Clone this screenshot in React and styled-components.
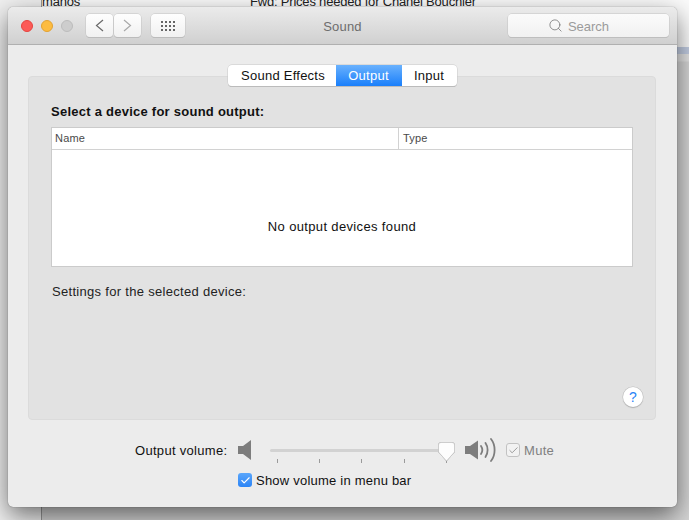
import React from "react";
import styled, { createGlobalStyle } from "styled-components";
import { Search as SearchGlyph, Check } from "lucide-react";

const GlobalStyle = createGlobalStyle`
	html, body {
		margin: 0;
		padding: 0;
		width: 689px;
		height: 520px;
		overflow: hidden;
		background: #f3f3f3;
		font-family: "Liberation Sans", Arial, sans-serif;
		-webkit-font-smoothing: antialiased;
	}
`;

const Desktop = styled.div`
	position: relative;
	width: 689px;
	height: 520px;
	padding: 7px 0 0 8px;
	box-sizing: border-box;
	overflow: hidden;
	background: #f0f0f0;
`;

// fragments of the mail window lying behind the Sound window
const BackMail = styled.div`
	position: absolute;
	left: 41px;
	top: 0;
	width: 648px;
	height: 520px;
	background: linear-gradient(to bottom, #fbfbfb 0, #fbfbfb 47px, #c2cde2 47px, #c2cde2 54px, #e4e4e4 54px, #e4e4e4 61px, #d6d6d6 62px);
	border-left: 1px solid #9a9a9a;
	box-sizing: border-box;
`;

const BackText = styled.span`
	position: absolute;
	top: -6px;
	left: ${(props) => props.$left}px;
	font-size: 13px;
	letter-spacing: -0.2px;
	color: #222;
	white-space: nowrap;
`;

const Window = styled.div`
	position: relative;
	width: 669px;
	height: 500px;
	border-radius: 5px;
	background: #ececec;
	box-shadow: 0 0 1px rgba(0, 0, 0, 0.6), 0 9px 26px rgba(0, 0, 0, 0.55);
	display: flex;
	flex-direction: column;
	overflow: hidden;
`;

const TitleBar = styled.header`
	height: 37px;
	flex: none;
	display: flex;
	align-items: center;
	padding: 0 8px 0 13px;
	background: linear-gradient(to bottom, #ebebeb, #d0d0d0);
	border-bottom: 1px solid #b0b0b0;
	position: relative;
`;

const Light = styled.span`
	width: 12px;
	height: 12px;
	border-radius: 50%;
	margin-right: 8px;
	box-sizing: border-box;
	background: ${(props) => props.$color};
	border: 1px solid ${(props) => props.$edge};
`;

const ToolButton = styled.button`
	height: 23px;
	width: ${(props) => props.$width}px;
	margin-left: ${(props) => props.$gap || 0}px;
	padding: 0;
	display: flex;
	align-items: center;
	justify-content: center;
	border: none;
	border-radius: 4px;
	background: linear-gradient(to bottom, #fefefe, #f1f1f1);
	box-shadow: 0 0 0 0.5px #c4c4c4, 0 1px 0 #b4b4b4;
	color: ${(props) => props.$color || "#6a6a6a"};
`;

const Title = styled.div`
	position: absolute;
	left: 0;
	right: 0;
	padding-top: 2px;
	text-align: center;
	font-size: 13px;
	letter-spacing: 0.2px;
	color: #6d6d6d;
`;

const SearchBox = styled.div`
	margin-left: auto;
	width: 161px;
	height: 23px;
	box-sizing: border-box;
	padding-right: 20px;
	display: flex;
	align-items: center;
	justify-content: center;
	gap: 5px;
	border-radius: 4px;
	background: linear-gradient(to bottom, #fbfbfb, #f1f1f1);
	box-shadow: 0 0 0 0.5px #c4c4c4, 0 1px 0 #b8b8b8;
	font-size: 13px;
	color: #9b9b9b;
`;

const SearchLabel = styled.span`
	padding-top: 2px;
`;

const Body = styled.main`
	flex: 1;
	display: flex;
	flex-direction: column;
	padding: 20px 20px 0;
`;

const Tabs = styled.div`
	align-self: center;
	display: flex;
	height: 21px;
	margin-bottom: -10px;
	margin-left: -1px;
	border-radius: 4px;
	background: #fff;
	box-shadow: 0 0 0 0.5px #c8c8c8, 0 1px 0 #aeaeae;
	overflow: hidden;
	position: relative;
	z-index: 1;
`;

const Tab = styled.div`
	width: ${(props) => props.$width}px;
	box-sizing: border-box;
	padding-left: ${(props) => props.$nudge || 0}px;
	display: flex;
	align-items: center;
	justify-content: center;
	font-size: 13px;
	letter-spacing: 0.25px;
	color: ${(props) => (props.$active ? "#fff" : "#111")};
	background: ${(props) => (props.$active ? "linear-gradient(to bottom, #69b1fd, #1a7ffb)" : "transparent")};
`;

const Panel = styled.section`
	width: 628px;
	height: 344px;
	box-sizing: border-box;
	display: flex;
	flex-direction: column;
	padding: 26px 23px 0 22px;
	background: #e2e2e2;
	border: 1px solid #dbdbdb;
	border-radius: 4px;
`;

const Heading = styled.h2`
	margin: 0 0 7px;
	font-size: 13px;
	line-height: 17px;
	font-weight: 700;
	letter-spacing: 0.25px;
	color: #111;
`;

const DeviceTable = styled.div`
	width: 582px;
	height: 140px;
	box-sizing: border-box;
	display: flex;
	flex-direction: column;
	background: #fff;
	border: 1px solid #cbcbcb;
`;

const HeaderRow = styled.div`
	height: 22px;
	flex: none;
	box-sizing: border-box;
	display: grid;
	grid-template-columns: 346px 1fr;
	border-bottom: 1px solid #d2d2d2;
`;

const HeaderCell = styled.div`
	line-height: 21px;
	padding-left: ${(props) => (props.$divided ? 4 : 3)}px;
	font-size: 11px;
	letter-spacing: 0.2px;
	color: #4a4a4a;
	border-left: ${(props) => (props.$divided ? "1px solid #d2d2d2" : "none")};
`;

const EmptyState = styled.div`
	flex: 1;
	display: flex;
	align-items: center;
	justify-content: center;
	padding-top: 37px;
	font-size: 13px;
	letter-spacing: 0.35px;
	color: #111;
`;

const SettingsLabel = styled.div`
	margin: 16px 0 0 1px;
	font-size: 13px;
	line-height: 17px;
	letter-spacing: 0.3px;
	color: #222;
`;

const HelpButton = styled.div`
	align-self: flex-end;
	margin: auto -11px 12px 0;
	width: 20px;
	height: 20px;
	display: flex;
	align-items: center;
	justify-content: center;
	border-radius: 50%;
	background: #fff;
	box-shadow: 0 0 0 0.5px #bdbdbd, 0 1px 1px #a8a8a8;
	font-size: 14px;
	color: #2a84f6;
`;

const VolumeRow = styled.div`
	margin-top: 16px;
	height: 28px;
	display: flex;
	align-items: center;
	padding-left: 107px;
	font-size: 13px;
	letter-spacing: 0.3px;
	color: #111;
`;

const VolumeLabel = styled.span`
	width: 103px;
	flex: none;
`;

const SliderBox = styled.div`
	position: relative;
	width: 184px;
	height: 28px;
	margin-left: 18px;
	flex: none;
`;

const SliderTrack = styled.div`
	position: absolute;
	left: 0;
	right: 9px;
	top: 13px;
	height: 3px;
	border-radius: 2px;
	background: #d2d2d2;
`;

const SliderTick = styled.div`
	position: absolute;
	top: 23px;
	width: 1px;
	height: 4px;
	background: #9a9a9a;
`;

const SliderThumb = styled.svg`
	position: absolute;
	left: 168px;
	top: 6px;
	filter: drop-shadow(0 0.5px 0.5px rgba(0, 0, 0, 0.45));
`;

const SpeakerIcon = styled.svg`
	flex: none;
	display: block;
	margin-left: ${(props) => props.$gap || 0}px;
`;

const CheckBox = styled.span`
	width: 14px;
	height: 14px;
	flex: none;
	box-sizing: border-box;
	display: flex;
	align-items: center;
	justify-content: center;
	margin-left: ${(props) => props.$gap || 0}px;
	border-radius: 3px;
	border: ${(props) => (props.$checked ? "none" : "1px solid #c2c2c2")};
	background: ${(props) => (props.$checked ? "linear-gradient(to bottom, #5aa6fb, #2b84f6)" : "#f2f2f2")};
	color: ${(props) => (props.$checked ? "#fff" : "#8a8a8a")};
`;

const MuteLabel = styled.span`
	margin-left: 4px;
	color: #808080;
`;

const MenuBarRow = styled.label`
	margin: 6px 0 0 210px;
	height: 20px;
	display: flex;
	align-items: center;
	gap: 4px;
	font-size: 13px;
	letter-spacing: 0.22px;
	color: #111;
`;

const ticks = [7, 49, 91, 134, 176];

export default function App() {
	return (
		<>
			<GlobalStyle />
			<Desktop>
				<BackMail>
					<BackText $left={0}>manos</BackText>
					<BackText $left={208}>Fwd: Prices needed for Chanel Bouchier</BackText>
				</BackMail>
				<Window>
					<TitleBar>
						<Light $color="#fc5b57" $edge="#e5443f" />
						<Light $color="#fdbc40" $edge="#e2a232" />
						<Light $color="#cdcdcd" $edge="#bcbcbc" />
						<ToolButton $width={27} $gap={5}>
							<svg width="9" height="13" viewBox="0 0 9 13" fill="none" stroke="currentColor" strokeWidth="1.2">
								<path d="M8 1 1.500 6.500 8 12" />
							</svg>
						</ToolButton>
						<ToolButton $width={27} $gap={1} $color="#a9a9a9">
							<svg width="9" height="13" viewBox="0 0 9 13" fill="none" stroke="currentColor" strokeWidth="1.2">
								<path d="M1 1 7.500 6.500 1 12" />
							</svg>
						</ToolButton>
						<ToolButton $width={34} $gap={10}>
							<svg width="16" height="12" viewBox="0 0 16 12" fill="#666">
								{[1, 5, 9].map((y) =>
									[1, 5, 9, 13].map((x) => <rect key={`${x}-${y}`} x={x} y={y} width="2" height="2" />)
								)}
							</svg>
						</ToolButton>
						<Title>Sound</Title>
						<SearchBox>
							<SearchGlyph size={15} strokeWidth={1.3} color="#777" />
							<SearchLabel>Search</SearchLabel>
						</SearchBox>
					</TitleBar>
					<Body>
						<Tabs>
							<Tab $width={108} $nudge={3}>Sound Effects</Tab>
							<Tab $width={66} $active>Output</Tab>
							<Tab $width={55}>Input</Tab>
						</Tabs>
						<Panel>
							<Heading>Select a device for sound output:</Heading>
							<DeviceTable>
								<HeaderRow>
									<HeaderCell>Name</HeaderCell>
									<HeaderCell $divided>Type</HeaderCell>
								</HeaderRow>
								<EmptyState>No output devices found</EmptyState>
							</DeviceTable>
							<SettingsLabel>Settings for the selected device:</SettingsLabel>
							<HelpButton>?</HelpButton>
						</Panel>
						<VolumeRow>
							<VolumeLabel>Output volume:</VolumeLabel>
							<SpeakerIcon width="14" height="20" viewBox="0 0 14 20">
								<path d="M0 6h5l8-6v20l-8-6H0z" fill="#7d7d7d" />
							</SpeakerIcon>
							<SliderBox>
								<SliderTrack />
								{ticks.map((x) => (
									<SliderTick key={x} style={{ left: x }} />
								))}
								<SliderThumb width="17" height="20" viewBox="0 0 17 20">
									<path d="M3 0.500h11a2.500 2.500 0 0 1 2.500 2.500v7L8.500 19 0.500 10V3A2.500 2.500 0 0 1 3 0.500z" fill="#fdfdfd" stroke="#cfcfcf" strokeWidth="0.6" />
								</SliderThumb>
							</SliderBox>
							<SpeakerIcon width="33" height="24" viewBox="0 0 33 24" $gap={11}>
								<path d="M0 8h5l8-5.500v19l-8-5.500H0z" fill="#7d7d7d" />
								<path d="M16 8c1.600 2.400 1.600 5.600 0 8M20.500 5c2.800 4 2.800 10 0 14M26 1c4.800 6 4.800 16 0 22" fill="none" stroke="#7d7d7d" strokeWidth="1.800" strokeLinecap="round" />
							</SpeakerIcon>
							<CheckBox $gap={8}>
								<Check size={11} strokeWidth={1.8} />
							</CheckBox>
							<MuteLabel>Mute</MuteLabel>
						</VolumeRow>
						<MenuBarRow>
							<CheckBox $checked>
								<Check size={11} strokeWidth={2.4} />
							</CheckBox>
							Show volume in menu bar
						</MenuBarRow>
					</Body>
				</Window>
			</Desktop>
		</>
	);
}
